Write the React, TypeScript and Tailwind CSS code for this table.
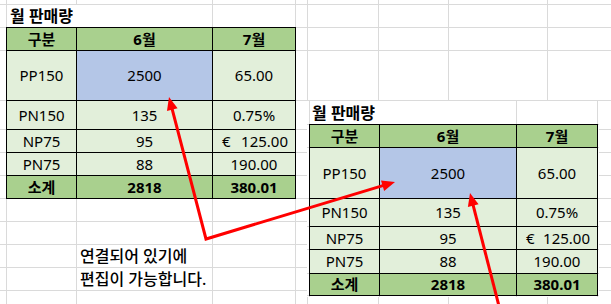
import React from "react";

type Row = { name: string; jun: string; jul: string; euro?: boolean; blue?: boolean };

const rows: Row[] = [
  { name: "PP150", jun: "2500", jul: "65.00", blue: true },
  { name: "PN150", jun: "135", jul: "0.75%" },
  { name: "NP75", jun: "95", jul: "125.00", euro: true },
  { name: "PN75", jun: "88", jul: "190.00" },
];

function TableCells() {
  return (
    <>
      <div className="bg-[#a9d08e] font-bold flex items-center justify-center">구분</div>
      <div className="bg-[#a9d08e] font-bold flex items-center justify-center">6월</div>
      <div className="bg-[#a9d08e] font-bold flex items-center justify-center">7월</div>
      {rows.map((r) => (
        <React.Fragment key={r.name}>
          <div className="bg-[#e2efda] flex items-center justify-center">{r.name}</div>
          <div
            className={
              r.blue
                ? "bg-[#b4c6e7] flex items-center justify-center"
                : "bg-[#e2efda] flex items-center justify-center"
            }
          >
            {r.jun}
          </div>
          {r.euro ? (
            <div className="bg-[#e2efda] flex items-center justify-between pl-[9px] pr-[7px]">
              <span>€</span>
              <span>{r.jul}</span>
            </div>
          ) : (
            <div className="bg-[#e2efda] flex items-center justify-center">{r.jul}</div>
          )}
        </React.Fragment>
      ))}
      <div className="bg-[#a9d08e] font-bold flex items-center justify-center">소계</div>
      <div className="bg-[#a9d08e] font-bold flex items-center justify-center">2818</div>
      <div className="bg-[#a9d08e] font-bold flex items-center justify-center">380.01</div>
    </>
  );
}

function Blanks({ n }: { n: number }) {
  return (
    <>
      {Array.from({ length: n }).map((_, i) => (
        <div key={i} className="bg-white" />
      ))}
    </>
  );
}

function arrowHead(fx: number, fy: number, tx: number, ty: number, L = 13, W = 5.5) {
  const dx = tx - fx;
  const dy = ty - fy;
  const len = Math.hypot(dx, dy);
  const ux = dx / len;
  const uy = dy / len;
  const bx = tx - ux * L;
  const by = ty - uy * L;
  const px = -uy;
  const py = ux;
  return {
    base: [bx + ux * 2, by + uy * 2] as [number, number],
    points: `${tx},${ty} ${bx + px * W},${by + py * W} ${bx - px * W},${by - py * W}`,
  };
}

function Arrows() {
  const v: [number, number] = [206, 239];
  const t1: [number, number] = [169, 97];
  const t2: [number, number] = [395, 182];
  const s3: [number, number] = [500, 310];
  const t3: [number, number] = [470, 193];
  const a1 = arrowHead(v[0], v[1], t1[0], t1[1]);
  const a2 = arrowHead(v[0], v[1], t2[0], t2[1]);
  const a3 = arrowHead(s3[0], s3[1], t3[0], t3[1]);
  return (
    <svg className="absolute left-0 top-0 pointer-events-none" width={611} height={304} viewBox="0 0 611 304">
      <polyline
        points={`${a1.base[0]},${a1.base[1]} ${v[0]},${v[1]} ${a2.base[0]},${a2.base[1]}`}
        fill="none"
        stroke="#ff0000"
        strokeWidth={3}
        strokeLinejoin="miter"
      />
      <polygon points={a1.points} fill="#ff0000" />
      <polygon points={a2.points} fill="#ff0000" />
      <line x1={s3[0]} y1={s3[1]} x2={a3.base[0]} y2={a3.base[1]} stroke="#ff0000" strokeWidth={3} />
      <polygon points={a3.points} fill="#ff0000" />
    </svg>
  );
}

export default function App() {
  return (
    <div className="relative w-[611px] h-[304px] overflow-hidden bg-white text-[15px] leading-none text-black font-['Noto_Sans','Noto_Sans_CJK_KR',sans-serif]">
      {/* Base worksheet */}
      <div className="grid h-full gap-px bg-[#dadada] grid-cols-[6px_69px_135px_82px_11px_70px_69px_98px_1fr] grid-rows-[4px_22px_22px_49px_28px_22px_22px_22px_22px_22px_22px_22px_1fr]">
        {/* row 1 */}
        <Blanks n={9} />
        {/* row 2 */}
        <div className="bg-white" />
        <div className="col-span-2 bg-white flex items-center pl-[3px] font-bold text-[16px]">월 판매량</div>
        <Blanks n={6} />
        {/* row 3 */}
        <div className="bg-white" />
        <div className="col-span-3 row-span-6 -m-px grid gap-px p-px bg-black grid-cols-[69px_135px_82px] grid-rows-[22px_49px_28px_22px_22px_22px]">
          <TableCells />
        </div>
        <Blanks n={5} />
        {/* rows 4-8 */}
        <Blanks n={30} />
        {/* rows 9-10 */}
        <Blanks n={18} />
        {/* row 11 */}
        <Blanks n={2} />
        <div className="bg-white flex items-center pl-[3px] whitespace-nowrap font-medium text-[16px]">연결되어 있기에</div>
        <Blanks n={6} />
        {/* row 12 */}
        <Blanks n={2} />
        <div className="bg-white flex items-center pl-[3px] whitespace-nowrap font-medium text-[16px]">편집이 가능합니다.</div>
        <Blanks n={6} />
        {/* row 13 */}
        <Blanks n={9} />
      </div>

      {/* Linked picture pasted over the sheet */}
      <div className="absolute left-[307px] top-[100px] w-[292px] h-[197px] grid gap-px pt-px bg-[#dadada] grid-cols-[2px_69px_136px_80px_1fr] grid-rows-[23px_22px_50px_27px_22px_23px_21px_1fr]">
        <div className="bg-white" />
        <div className="col-span-2 bg-white flex items-center pl-[2px] font-bold text-[16px]">월 판매량</div>
        <Blanks n={2} />
        <div className="bg-white" />
        <div className="col-span-3 row-span-6 -m-px grid gap-px p-px bg-black grid-cols-[69px_136px_80px] grid-rows-[22px_50px_27px_22px_23px_21px]">
          <TableCells />
        </div>
        <div className="bg-white" />
        <Blanks n={10} />
        <Blanks n={5} />
      </div>

      <Arrows />
    </div>
  );
}
